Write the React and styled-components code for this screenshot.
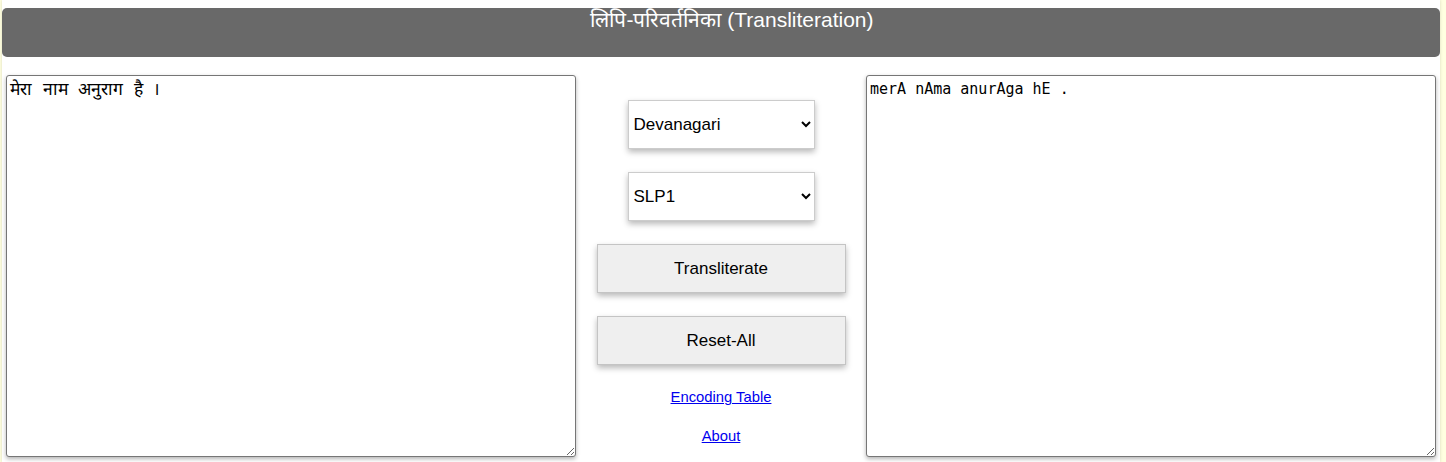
import React, { useState } from 'react'
import styled, { createGlobalStyle } from 'styled-components'

const GlobalStyle = createGlobalStyle`
  html, body {
    margin: 0;
    padding: 0;
    background-color: #ffffe0;
  }

  body {
    font-family: "Liberation Sans", Arial, sans-serif;
  }
`

const scripts = ['Devanagari', 'Bengali', 'Gujarati', 'Gurmukhi', 'Kannada', 'Malayalam', 'Oriya', 'Tamil', 'Telugu']
const schemes = ['SLP1', 'ITRANS', 'IAST', 'Harvard-Kyoto', 'Velthuis', 'WX']

export default function App() {
  const [source, setSource] = useState('मेरा नाम अनुराग है ।')
  const [target, setTarget] = useState('merA nAma anurAga hE .')
  const [from, setFrom] = useState('Devanagari')
  const [to, setTo] = useState('SLP1')

  return (
    <>
      <GlobalStyle />
      <Page>
        <Header>लिपि-परिवर्तनिका (Transliteration)</Header>

        <Workspace>
          <TextBox $indic value={source} onChange={e => setSource(e.target.value)} />

          <Controls>
            <Select value={from} onChange={e => setFrom(e.target.value)}>
              {scripts.map(item => (
                <option key={item}>{item}</option>
              ))}
            </Select>
            <Select value={to} onChange={e => setTo(e.target.value)}>
              {schemes.map(item => (
                <option key={item}>{item}</option>
              ))}
            </Select>
            <Button>Transliterate</Button>
            <Button
              onClick={() => {
                setSource('')
                setTarget('')
              }}
            >
              Reset-All
            </Button>
            <Links>
              <Link href="#encoding">Encoding Table</Link>
              <Link href="#about">About</Link>
            </Links>
          </Controls>

          <TextBox value={target} onChange={e => setTarget(e.target.value)} />
        </Workspace>
      </Page>
    </>
  )
}

const Page = styled.div`
  margin: 0 6px 0 2px;
  padding-top: 8px;
  height: 462px;
  box-sizing: border-box;
  background-color: #ffffff;
  box-shadow: 0 0 3px rgba(0, 0, 0, 0.15);
`

const Header = styled.h2`
  margin: 0;
  height: 49px;
  line-height: 24px;
  border-radius: 5px;
  background-color: #696969;
  color: #ffffff;
  font-size: 21px;
  font-weight: normal;
  text-align: center;
  padding-left: 22px;
`

const Workspace = styled.div`
  display: grid;
  grid-template-columns: 570px 1fr 570px;
  padding: 18px 4px 0;
`

const TextBox = styled.textarea`
  box-sizing: border-box;
  height: 382px;
  margin: 0;
  padding: 3px 3px;
  border: 1px solid #767676;
  border-radius: 3px;
  box-shadow: 0 2px 4px rgba(0, 0, 0, 0.3);
  font-family: "DejaVu Sans Mono", "Liberation Mono", monospace;
  font-size: ${p => (p.$indic ? '17.5px' : '15px')};
  line-height: 20px;
  color: #000000;
  resize: both;
  outline: none;
`

const Controls = styled.div`
  display: flex;
  flex-direction: column;
  align-items: center;
  gap: 23px;
  padding-top: 25px;
`

const Select = styled.select`
  box-sizing: border-box;
  width: 187px;
  height: 49px;
  padding: 0 4px 0 1px;
  border: 1px solid #cccccc;
  border-radius: 0;
  background-color: #ffffff;
  box-shadow: 0 3px 6px rgba(0, 0, 0, 0.28);
  font-family: "Liberation Sans", Arial, sans-serif;
  font-size: 17px;
  color: #000000;
`

const Button = styled.button`
  box-sizing: border-box;
  width: 249px;
  height: 49px;
  border: 1px solid #c4c4c4;
  background-color: #efefef;
  box-shadow: 0 3px 6px rgba(0, 0, 0, 0.28);
  font-family: "Liberation Sans", Arial, sans-serif;
  font-size: 17px;
  color: #000000;
  cursor: pointer;
`

const Links = styled.div`
  display: flex;
  flex-direction: column;
  align-items: center;
  gap: 22px;
  padding-top: 1px;
`

const Link = styled.a`
  color: #0000ee;
  font-size: 14.8px;
  line-height: 17px;
  text-decoration: underline;
`
